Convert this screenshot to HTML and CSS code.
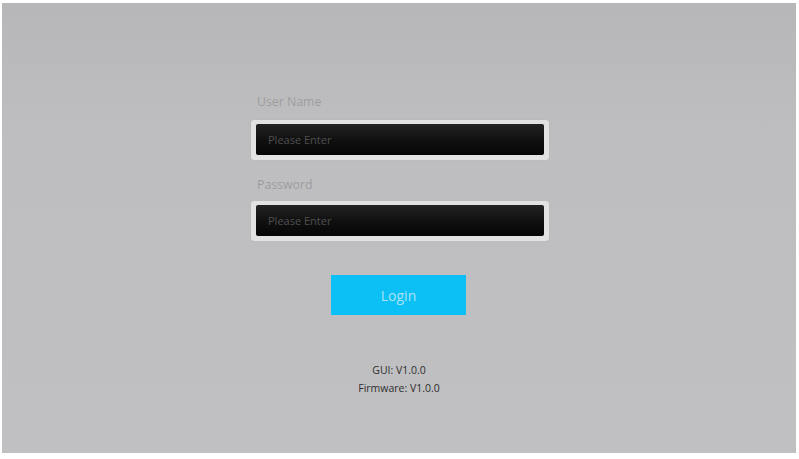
FILE: index.html
```html
<!DOCTYPE html>
<html>
<head>
<meta charset="utf-8">
<link rel="stylesheet" href="styles.css">
</head>
<body>
<div class="screen">
  <form class="login">
    <label class="label">User Name</label>
    <div class="field"><input class="input" type="text" placeholder="Please Enter"></div>
    <label class="label label-second">Password</label>
    <div class="field"><input class="input" type="password" placeholder="Please Enter"></div>
    <button class="btn" type="button">Login</button>
    <div class="version">
      <div>GUI: V1.0.0</div>
      <div>Firmware: V1.0.0</div>
    </div>
  </form>
</div>
</body>
</html>
```
FILE: styles.css
```css
html, body {
  margin: 0;
  padding: 0;
  background: #ffffff;
}
body {
  padding: 3px 3px 0 2px;
  font-family: "Open Sans", "Liberation Sans", sans-serif;
}
.screen {
  width: 794px;
  height: 450px;
  background: linear-gradient(180deg, #b7b7b9 0%, #bebec0 30%, #c0c0c2 100%);
  display: flex;
  justify-content: center;
}
.login {
  width: 298px;
  display: flex;
  flex-direction: column;
  padding-top: 91px;
  margin-left: 2px;
}
.label {
  font-size: 12.3px;
  line-height: 16px;
  color: #9c9c9e;
  padding-left: 6px;
  margin-bottom: 10px;
}
.label-second {
  margin-top: 17px;
  margin-bottom: 8px;
}
.field {
  background: #e2e2e2;
  padding: 4px 5px 5px;
  border-radius: 3px;
  box-shadow: 0 0 1px rgba(0,0,0,0.15);
}
.input {
  display: block;
  width: 100%;
  box-sizing: border-box;
  height: 31px;
  border: none;
  border-radius: 2px;
  background: linear-gradient(180deg, #222222 0%, #111111 50%, #050505 100%);
  color: #ddd;
  font-family: "Open Sans", "Liberation Sans", sans-serif;
  font-size: 11px;
  padding: 0 12px;
  outline: none;
}
.input::placeholder {
  color: #4f4f4f;
}
.btn {
  align-self: center;
  margin-top: 34px;
  margin-left: -3px;
  width: 135px;
  height: 40px;
  border: none;
  background: #0cbff5;
  color: #a8e4f8;
  font-family: "Open Sans", "Liberation Sans", sans-serif;
  font-size: 14px;
  padding: 0;
}
.version {
  margin-top: 46px;
  text-align: center;
  font-size: 10.5px;
  line-height: 18px;
  color: #2e2e2e;
  margin-left: -2px;
}
```
